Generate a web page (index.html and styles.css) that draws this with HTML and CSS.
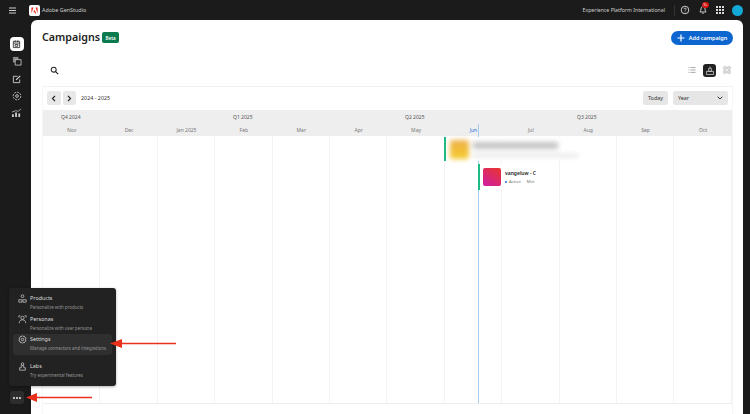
FILE: index.html
```html
<!DOCTYPE html>
<html lang="en">
<head>
<meta charset="utf-8">
<title>Campaigns</title>
<link rel="stylesheet" href="styles.css">
</head>
<body>
<header class="topbar">
  <div class="top-left">
    <svg class="hamburger" width="7" height="7" viewBox="0 0 7 7"><path d="M0 1h7M0 3.500h7M0 6h7" stroke="#e4e4e4" stroke-width=".9"/></svg>
    <span class="logo"><svg width="7" height="7" viewBox="0 0 8 8"><path d="M2.800 0.500H0.500V7.500zM5.200 0.500H7.500V7.500zM4 3L6 7.500H4.700L4.100 6H2.800z" fill="#e1251b"/></svg></span>
    <span class="app-name">Adobe GenStudio</span>
  </div>
  <div class="top-right">
    <span class="org">Experience Platform International</span>
    <span class="sep"></span>
    <svg class="ti" width="10" height="10" viewBox="0 0 10 10"><circle cx="5" cy="5" r="3.800" fill="none" stroke="#ddd" stroke-width=".9"/><path d="M3.900 4c.2-1.300 2.300-1.200 2.300 0 0 .8-1.200.9-1.200 1.700M5 6.500v.8" fill="none" stroke="#ddd" stroke-width=".8"/></svg>
    <span class="bell"><svg width="10" height="10" viewBox="0 0 10 10"><path d="M5 1.500C3.500 1.500 3 2.700 3 4c0 1.500-1 2.500-1 3h6c0-.5-1-1.500-1-3 0-1.300-.5-2.500-2-2.500zM4.200 8.200h1.600" fill="none" stroke="#ddd" stroke-width=".9"/></svg><i class="badge">9+</i></span>
    <span class="apps"><i></i><i></i><i></i><i></i><i></i><i></i><i></i><i></i><i></i></span>
    <span class="avatar"></span>
  </div>
</header>
<div class="shell">
  <nav class="rail">
    <span class="rail-btn active"><svg width="9" height="10" viewBox="0 0 10 10"><path d="M1.500 2h7v7h-7zM1.500 4h7M3.500 1v2M6.500 1v2M3.500 5.500h3v2h-3z" fill="none" stroke="#222" stroke-width=".9"/></svg></span>
    <span class="rail-btn"><svg width="10" height="10" viewBox="0 0 11 11"><path d="M1 1h6v6H1z" fill="#888"/><path d="M3.500 4h6.500v6H3.500z" fill="#1b1b1b" stroke="#ccc" stroke-width=".9"/></svg></span>
    <span class="rail-btn"><svg width="10" height="10" viewBox="0 0 11 11"><path d="M8.500 6v3.500h-7v-7H6" fill="none" stroke="#ddd" stroke-width=".9"/><path d="M4.500 6.500L9 2" fill="none" stroke="#ddd" stroke-width="1.200"/></svg></span>
    <span class="rail-btn"><svg width="10" height="10" viewBox="0 0 11 11"><circle cx="5.500" cy="5.500" r="4.200" fill="none" stroke="#ccc" stroke-width=".9" stroke-dasharray="2.200 1"/><circle cx="5.500" cy="5.500" r="1.500" fill="none" stroke="#ddd" stroke-width=".9"/></svg></span>
    <span class="rail-btn"><svg width="11" height="10" viewBox="0 0 12 11"><path d="M1 10V7h2v3zM4.500 10V5h2v5zM8 10V6h2v4z" fill="#ccc"/><path d="M1 4.500L5 3l3 .5L11 1" fill="none" stroke="#ccc" stroke-width=".8"/></svg></span>
    <span class="more"><i></i><i></i><i></i></span>
  </nav>
  <main class="panel">
    <div class="title-row">
      <div class="title-group"><h1>Campaigns</h1><span class="beta">Beta</span></div>
      <button class="add"><svg width="8" height="8" viewBox="0 0 8 8"><path d="M4 .5v7M.5 4h7" stroke="#fff" stroke-width="1.200"/></svg>Add campaign</button>
    </div>
    <div class="tool-row">
      <svg width="9" height="9" viewBox="0 0 11 11"><circle cx="4.500" cy="4.500" r="3" fill="none" stroke="#222" stroke-width="1.300"/><path d="M6.800 6.800L10 10" stroke="#222" stroke-width="1.500"/></svg>
      <div class="views">
        <svg width="8" height="8" viewBox="0 0 10 10"><path d="M3 2h6.500M3 5h6.500M3 8h6.500M.5 2h1.200M.5 5h1.200M.5 8h1.200" stroke="#888" stroke-width=".9"/></svg>
        <span class="view-on"><svg width="8" height="9" viewBox="0 0 9 10"><path d="M.5 6h8v3.500h-8zM3 2.500h3V6H3zM4.500 .5v2" fill="none" stroke="#ddd" stroke-width=".8"/></svg></span>
        <svg width="8" height="8" viewBox="0 0 10 10"><path d="M1 1h3v3H1zM6 1h3v3H6zM1 6h3v3H1zM6 6h3v3H6z" fill="none" stroke="#aaa" stroke-width=".9"/></svg>
      </div>
    </div>
    <section class="timeline">
      <div class="tl-controls">
        <div class="tl-left">
          <span class="nav-pair">
            <span class="nav-btn"><svg width="6" height="7" viewBox="0 0 6 7"><path d="M4 .8L1.500 3.500 4 6.200" fill="none" stroke="#222" stroke-width="1.200"/></svg></span>
            <span class="nav-btn"><svg width="6" height="7" viewBox="0 0 6 7"><path d="M2 .8L4.500 3.500 2 6.200" fill="none" stroke="#222" stroke-width="1.200"/></svg></span>
          </span>
          <span class="range">2024 - 2025</span>
        </div>
        <div class="tl-right">
          <span class="today">Today</span>
          <span class="year">Year<svg width="6" height="4" viewBox="0 0 6 4"><path d="M.7 .7L3 3l2.300-2.300" fill="none" stroke="#333" stroke-width="1"/></svg></span>
        </div>
      </div>
      <div class="tl-head">
        <div class="quarters">
          <span>Q4 2024</span><span>Q1 2025</span><span>Q2 2025</span><span>Q3 2025</span>
        </div>
        <div class="months">
          <span>Nov</span><span>Dec</span><span>Jan 2025</span><span>Feb</span><span>Mar</span><span>Apr</span><span>May</span><span class="now">Jun</span><span>Jul</span><span>Aug</span><span>Sep</span><span>Oct</span>
        </div>
      </div>
      <div class="tl-body">
        <div class="cols">
          <i></i><i></i><i></i><i></i><i></i><i></i><i></i><i></i><i></i><i></i><i></i><i></i>
        </div>
        <div class="today-line"></div>
        <div class="item blurred">
          <span class="thumb-y"></span>
          <div class="blur-text"><b></b><em></em></div>
        </div>
        <div class="item second">
          <span class="thumb-p"></span>
          <div class="item-text">
            <strong>vangeluw - C</strong>
            <span class="meta"><i></i>Active<span class="bar">Met</span></span>
          </div>
        </div>
      </div>
    </section>
  </main>
</div>
<div class="popup">
  <div class="pop-item">
    <div class="pop-title"><svg width="9" height="9" viewBox="0 0 11 11"><circle cx="5.500" cy="2.700" r="1.700" fill="none" stroke="#ccc" stroke-width=".9"/><path d="M1 10V7h4v3zM6 10V7h4v3z" fill="none" stroke="#ccc" stroke-width=".9"/></svg>Products</div>
    <div class="pop-sub">Personalize with products</div>
  </div>
  <div class="pop-item">
    <div class="pop-title"><svg width="9" height="9" viewBox="0 0 11 11"><circle cx="5.500" cy="3.500" r="2" fill="none" stroke="#ccc" stroke-width=".9"/><path d="M1.500 10c0-3 1.500-4 4-4s4 1 4 4M1 3V1h2M10 3V1H8" fill="none" stroke="#ccc" stroke-width=".9"/></svg>Personas</div>
    <div class="pop-sub">Personalize with user persona</div>
  </div>
  <div class="pop-item selected">
    <div class="pop-title"><svg width="9" height="9" viewBox="0 0 11 11"><path d="M5.500 .8l1 1 1.400-.1.500 1.300 1.300.8-.4 1.700.4 1.700-1.300.8-.5 1.300-1.400-.1-1 1-1-1-1.400.1-.5-1.300L1.300 7.200l.4-1.700-.4-1.700 1.300-.8.500-1.300 1.400.1z" fill="none" stroke="#ddd" stroke-width=".9"/><circle cx="5.500" cy="5.500" r="1.500" fill="none" stroke="#ddd" stroke-width=".9"/></svg>Settings</div>
    <div class="pop-sub">Manage connectors and integrations</div>
  </div>
  <div class="pop-item labs">
    <div class="pop-title"><svg width="9" height="9" viewBox="0 0 11 11"><circle cx="5.500" cy="2.500" r="1.600" fill="none" stroke="#ccc" stroke-width=".9"/><path d="M4 4.500h3V7H9v3H2V7h2z" fill="none" stroke="#ccc" stroke-width=".9"/></svg>Labs</div>
    <div class="pop-sub">Try experimental features</div>
  </div>
</div>
<svg class="arrows" width="750" height="414" viewBox="0 0 750 414">
  <path d="M176 343.500H122" stroke="#e8301c" stroke-width="1.500"/>
  <path d="M110 343.500L122 339V348z" fill="#e8301c"/>
  <path d="M92 397.500H36" stroke="#e8301c" stroke-width="1.500"/>
  <path d="M26 397.500L37 393V402z" fill="#e8301c"/>
</svg>
</body>
</html>
```

FILE: styles.css
```css
* { box-sizing: border-box; }
html, body { margin: 0; height: 100%; }
body {
  width: 750px; height: 414px; overflow: hidden; background: #1b1b1b;
  font-family: "Noto Sans", "Open Sans", sans-serif; color: #222;
  display: flex; flex-direction: column; position: relative;
}
.topbar { height: 20px; display: flex; justify-content: space-between; align-items: center; padding: 0 7px 0 9px; color: #ddd; flex: none; }
.top-left, .top-right { display: flex; align-items: center; }
.hamburger { margin-right: 13px; }
.logo { width: 11px; height: 11px; background: #fff; border-radius: 2px; display: flex; align-items: center; justify-content: center; margin-right: 2px; }
.app-name { font-size: 5.400px; color: #ccc; }
.org { font-size: 5.200px; color: #d0d0d0; }
.sep { width: 1px; height: 11px; background: #333; margin: 0 5px 0 9px; }
.ti { margin-right: 8px; }
.bell { position: relative; width: 10px; height: 10px; margin-right: 8px; display: block; }
.bell svg { display: block; }
.badge { position: absolute; top: -3px; left: 4px; width: 7px; height: 6px; background: #d31510; border-radius: 3px; font: normal 3.500px "Noto Sans", sans-serif; color: #fff; text-align: center; line-height: 6px; }
.apps { display: grid; grid-template-columns: repeat(3, 2px); gap: 1px; margin-right: 8px; }
.apps i { width: 2px; height: 2px; background: #d8d8d8; }
.avatar { width: 11px; height: 11px; border-radius: 50%; background: #12a9d6; }
.shell { flex: 1; display: flex; min-height: 0; }
.rail { width: 31px; flex: none; display: flex; flex-direction: column; align-items: center; padding: 17px 0 0 0; gap: 3.300px; position: relative; }
.rail-btn { width: 14px; height: 14px; display: flex; align-items: center; justify-content: center; margin-left: 2px; }
.rail-btn.active { background: #fff; border-radius: 4px; }
.more { position: absolute; left: 10px; top: 371px; width: 14px; height: 13px; background: #2d2d2d; border-radius: 3px; display: flex; align-items: center; justify-content: center; gap: 1px; }
.more i { width: 2px; height: 2px; background: #eee; border-radius: 50%; }
.panel { width: 712px; background: #fff; border-radius: 6px 6px 0 0; padding: 10px 10px 0 11px; display: flex; flex-direction: column; min-height: 0; }
.title-row { display: flex; justify-content: space-between; align-items: center; height: 15px; }
.title-group { display: flex; align-items: center; gap: 2px; }
h1 { font-size: 10.700px; font-weight: 600; margin: 0; color: #222; line-height: 15px; }
.beta { background: #0b7a4f; color: #fff; font-size: 4.500px; font-weight: 600; border-radius: 2px; height: 11px; width: 17px; display: flex; align-items: center; justify-content: center; }
.add { border: 0; background: #0d66d0; color: #fff; font: 600 5.500px "Noto Sans", sans-serif; height: 14px; width: 62px; border-radius: 7px; display: flex; align-items: center; justify-content: center; gap: 4px; padding: 0; }
.tool-row { height: 14px; margin-top: 18px; padding: 0 8px; display: flex; justify-content: space-between; align-items: center; }
.views { display: flex; align-items: center; gap: 7px; margin-right: -6px; }
.view-on { width: 13px; height: 13px; border-radius: 3px; background: #222; display: flex; align-items: center; justify-content: center; }
.timeline { margin-top: 9px; flex: 1; border-top: 1px solid #f2f2f2; border-left: 1px solid #f6f6f6; border-right: 1px solid #f6f6f6; display: flex; flex-direction: column; min-height: 0; }
.tl-controls { height: 23px; padding: 4px 4px 0 4px; display: flex; justify-content: space-between; align-items: flex-start; }
.tl-left, .tl-right { display: flex; align-items: center; gap: 5px; }
.nav-pair { display: flex; gap: 2px; }
.nav-btn { width: 13.500px; height: 14px; background: #e8e8e8; border-radius: 2px; display: flex; align-items: center; justify-content: center; }
.range { font-size: 5.400px; color: #333; }
.today { width: 25px; height: 14px; background: #e6e6e6; border-radius: 2px; font-size: 5.400px; color: #333; display: flex; align-items: center; justify-content: center; }
.year { width: 55px; height: 14px; background: #e6e6e6; border-radius: 2px; font-size: 5.400px; color: #333; display: flex; align-items: center; justify-content: space-between; padding: 0 5px; }
.tl-head { height: 26px; background: #eeeeee; flex: none; }
.quarters { height: 14px; display: grid; grid-template-columns: repeat(4, 172px); font-size: 5px; color: #555; align-items: center; }
.quarters span { padding-left: 18px; }
.months { height: 12px; display: grid; grid-template-columns: repeat(12, 57.400px); font-size: 5px; color: #777; text-align: center; align-items: center; }
.months .now { color: #1473e6; }
.tl-body { position: relative; flex: 1; min-height: 0; border-bottom: 1px solid #eee; margin-bottom: 10px; }
.cols { display: grid; grid-template-columns: repeat(12, 57.400px); height: 100%; position: absolute; inset: 0; }
.cols i { border-right: 1px solid #f3f3f3; }
.today-line { position: absolute; left: 435px; top: -12px; bottom: 0; width: 1px; background: #a8cdf3; }
.item { position: absolute; display: flex; align-items: center; background: #fff; }
.blurred { left: 401px; top: 1px; width: 150px; height: 24px; border-left: 2px solid #1dba86; padding-left: 4px; gap: 4px; }
.thumb-y { width: 19px; height: 19px; background: linear-gradient(#eeb04a, #f5cb2b); border-radius: 3px; filter: blur(2.500px); }
.blur-text { display: flex; flex-direction: column; gap: 5px; filter: blur(2.500px); }
.blur-text b { display: block; width: 85px; height: 7px; background: #c4c4c4; }
.blur-text em { display: block; width: 105px; height: 3px; background: #e2e2e2; }
.second { left: 435px; top: 28px; width: 66px; height: 26px; border-left: 2px solid #1dba86; padding-left: 3px; gap: 4px; }
.thumb-p { width: 18px; height: 18px; flex: none; border-radius: 2px; background: linear-gradient(35deg, #cf1ea7, #e8352a); }
.item-text { display: flex; flex-direction: column; gap: 3px; white-space: nowrap; }
.item-text strong { font-size: 5px; font-weight: 600; }
.meta { font-size: 4.200px; color: #777; display: flex; align-items: center; gap: 2px; }
.meta i { width: 2px; height: 2px; border-radius: 50%; background: #1473e6; }
.bar { margin-left: 4px; }
.popup { position: absolute; left: 9px; top: 288px; width: 107px; height: 98px; background: #222; border-radius: 3px; box-shadow: 0 1px 3px rgba(0,0,0,.3); padding: 5px 4px; display: flex; flex-direction: column; }
.pop-item { height: 21.500px; padding: 1px 5px 0 5px; }
.pop-item.selected { background: #2f2f2f; border-radius: 3px; }
.pop-item.labs { margin-top: 6px; }
.pop-title { font-size: 5.400px; color: #ddd; display: flex; align-items: center; gap: 3px; line-height: 9px; }
.pop-sub { font-size: 4.400px; color: #969696; padding-left: 12px; line-height: 8px; white-space: nowrap; }
.arrows { position: absolute; left: 0; top: 0; pointer-events: none; }
```
